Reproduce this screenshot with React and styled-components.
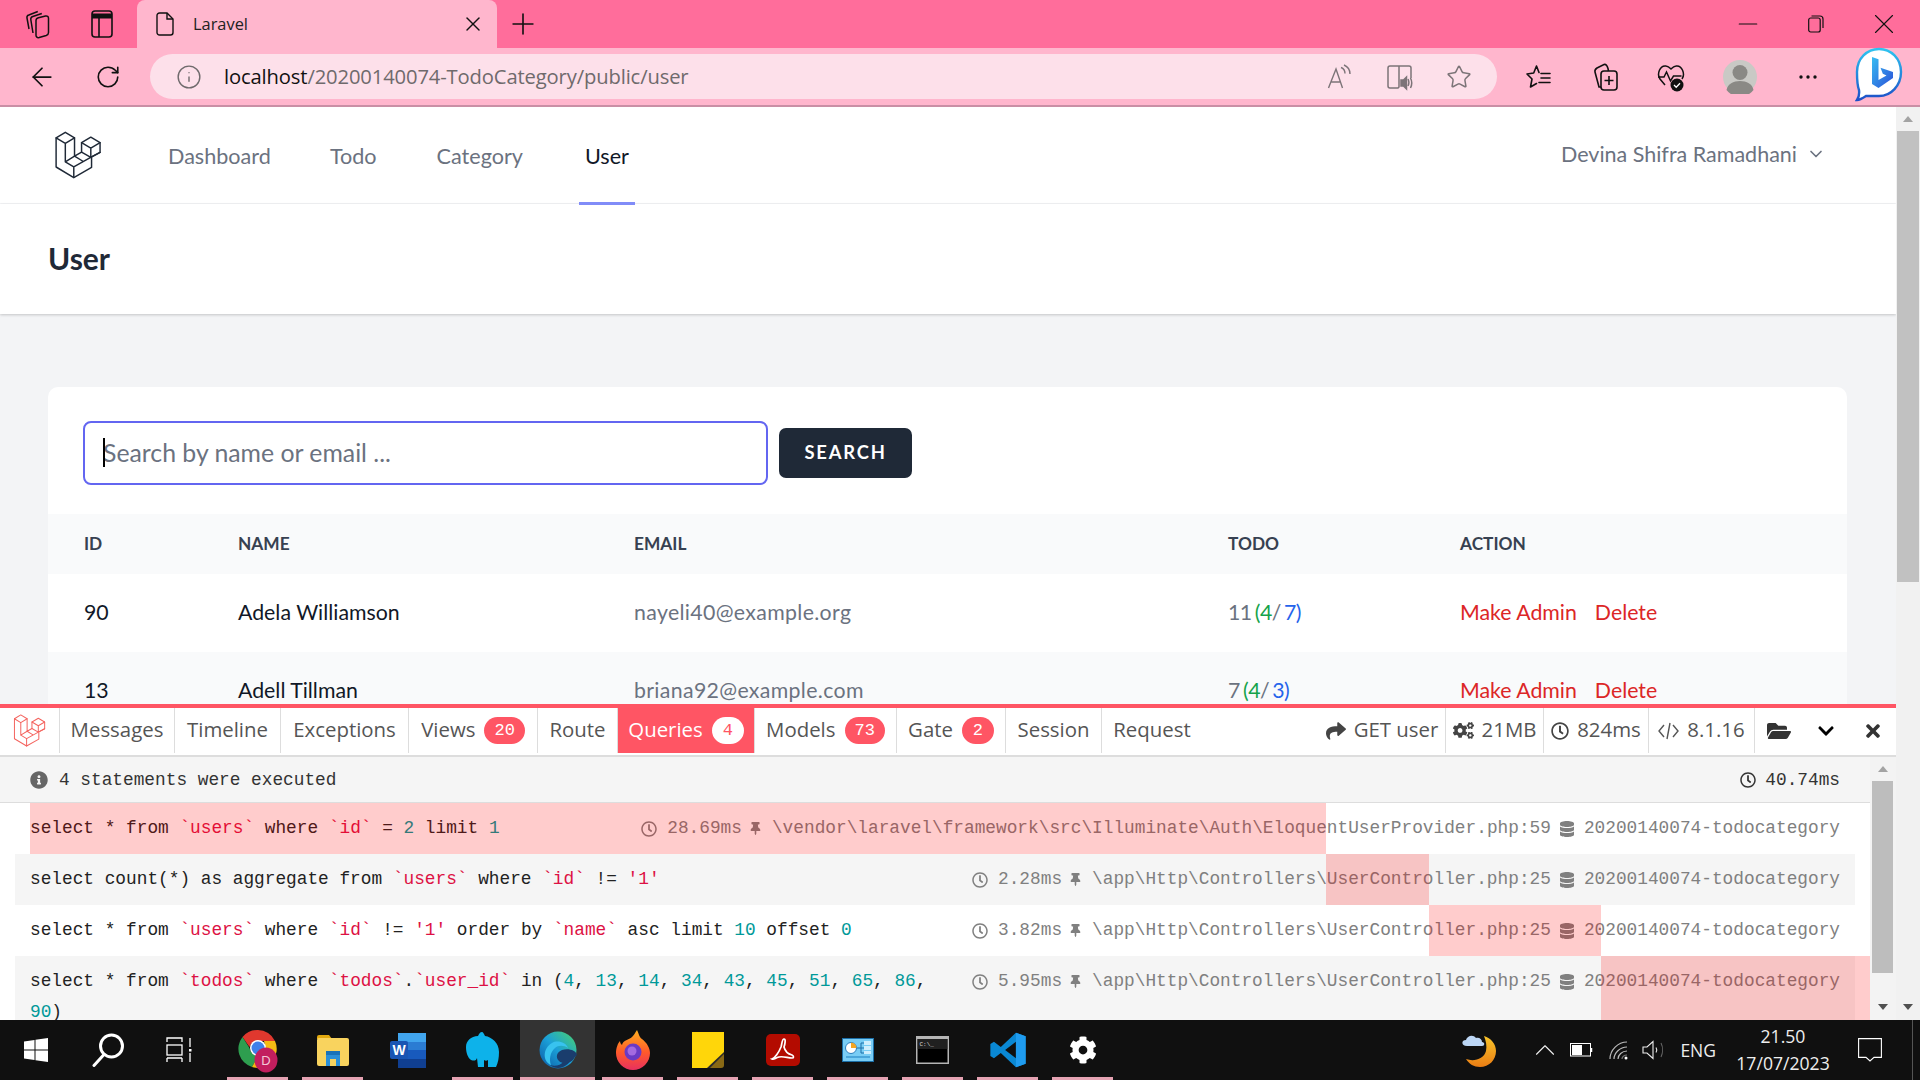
import React from 'react';
import styled, { createGlobalStyle } from 'styled-components';
import { ArrowLeft, RotateCw, Plus, X, Minus, Info, Star, ChevronDown, ChevronUp } from 'lucide-react';
import { FaShare, FaCogs, FaRegClock, FaFolderOpen, FaChevronDown, FaTimes, FaThumbtack, FaDatabase, FaInfoCircle, FaCog } from 'react-icons/fa';

const Global = createGlobalStyle`
  html, body { margin: 0; padding: 0; width: 1920px; height: 1080px; overflow: hidden; background: #fff; }
  * { box-sizing: border-box; }
`;

const RED = '#ff5564';
const UI = '"Open Sans", "Noto Sans", sans-serif';
const APP = 'Lato, "Open Sans", sans-serif';
const MONO = '"Liberation Mono", monospace';

const Screen = styled.div`
  width: 1920px; height: 1080px; display: flex; flex-direction: column; overflow: hidden; font-family: ${UI};
`;

/* browser chrome */
const TabStrip = styled.div`
  height: 48px; flex: none; background: #ff6d9b; display: flex; align-items: center;
`;
const Slot = styled.div`
  width: ${p => p.$w}px; height: 100%; flex: none; display: flex; align-items: center; justify-content: center; color: ${p => p.$c || '#111'};
`;
const Tab = styled.div`
  width: 360px; height: 48px; margin-left: 9px; background: #ffb6cd; border-radius: 8px 8px 0 0; display: flex; align-items: center; padding-left: 19px; flex: none;
`;
const TabTitle = styled.span`
  font-size: 16.4px; color: #222; margin-left: 19px; flex: 1; padding-bottom: 2px;
`;
const WindowControls = styled.div`
  margin-left: auto; display: flex; height: 100%; padding-right: 2px;
`;
const Toolbar = styled.div`
  height: 59px; flex: none; background: #ffb6cd; border-bottom: 2px solid #c98fa5; display: flex; align-items: center;
`;
const Omnibox = styled.div`
  width: 1347px; height: 45px; margin-left: 18px; margin-right: 9px; border-radius: 23px; background: #fde0ea; display: flex; align-items: center; padding-left: 22px; padding-right: 8px; flex: none;
`;
const Url = styled.div`
  margin-left: 18px; padding-bottom: 2px; font-size: 20.2px; color: #6f6a6c; white-space: nowrap; letter-spacing: -.13px;
  b { font-weight: 400; color: #111; }
`;
const OmniActions = styled.div`
  margin-left: auto; display: flex; height: 100%;
`;

/* page */
const Body = styled.div`
  flex: 1; min-height: 0; position: relative; display: flex;
`;
const Page = styled.div`
  flex: 1; min-width: 0; background: #f3f4f6; overflow: hidden;
`;
const Scrollbar = styled.div`
  width: 24px; flex: none; background: #f1f1f1; display: flex; flex-direction: column; align-items: center; position: relative;
`;
const ArrowUp = styled.div`
  width: 0; height: 0; border-left: 5px solid transparent; border-right: 5px solid transparent; border-bottom: 6px solid #a3a3a3; margin-top: 9px;
`;
const ScrollThumb = styled.div`
  width: 22px; height: 451px; background: #c1c1c1; margin-top: 9px;
`;
const ArrowDown = styled.div`
  width: 0; height: 0; border-left: 5px solid transparent; border-right: 5px solid transparent; border-top: 6px solid #505050; margin-top: auto; margin-bottom: 10px;
`;
const Nav = styled.nav`
  height: 97px; background: #fff; border-bottom: 1px solid #f3f4f6; display: flex; align-items: stretch; padding-left: 54px; padding-right: 70px;
`;
const LogoBox = styled.div`
  display: flex; align-items: center; width: 108px; flex: none; padding-bottom: 1px;
`;
const NavLink = styled.a`
  display: flex; align-items: center; margin-left: ${p => p.$ml}px; padding: 2px 6px 0; height: 98px; font-family: ${APP}; font-size: 21.6px; color: ${p => p.$active ? '#111827' : '#6b7280'};
  border-bottom: 3px solid ${p => p.$active ? '#818cf8' : 'transparent'};
`;
const UserMenu = styled.div`
  margin-left: auto; display: flex; align-items: center; gap: 9px; font-family: ${APP}; font-size: 21.5px; color: #6b7280; padding-bottom: 3px;
`;
const PageHeader = styled.header`
  height: 110px; background: #fff; box-shadow: 0 1px 3px rgba(0,0,0,.14), 0 1px 2px rgba(0,0,0,.06); display: flex; align-items: center; padding: 0 0 2px 48px;
`;
const PageTitle = styled.h2`
  margin: 0; font-family: ${APP}; font-size: 30px; font-weight: 700; color: #1f2937;
`;
const Card = styled.section`
  margin: 73px 49px 0 48px; background: #fff; border-radius: 10px; overflow: hidden;
`;
const SearchRow = styled.div`
  display: flex; align-items: center; gap: 11px; padding: 34px 35px 29px;
`;
const InputWrap = styled.div`
  position: relative; width: 685px; height: 64px; flex: none;
`;
const SearchInput = styled.input`
  width: 100%; height: 100%; border: 2px solid #6366f1; border-radius: 8px; padding: 0 18px 2px; outline: none; background: #fff; font-family: ${APP}; font-size: 24.8px; color: #111;
  &::placeholder { color: #6b7280; opacity: 1; }
`;
const Caret = styled.span`
  position: absolute; left: 20px; top: 17px; width: 1.5px; height: 29px; background: #000;
`;
const SearchButton = styled.button`
  width: 133px; height: 50px; border: 0; border-radius: 7px; padding: 0 0 2px; background: #1f2937; color: #fff; font-family: ${APP}; font-weight: 700; font-size: 18.4px; letter-spacing: 1.8px;
`;
const TableRow = styled.div`
  display: grid; grid-template-columns: 154px 396px 594px 232px 1fr; padding-left: 36px; align-items: center;
  height: ${p => p.$h}px; background: ${p => p.$alt ? '#f9fafb' : '#fff'};
`;
const Th = styled.div`
  font-family: ${APP}; font-weight: 700; font-size: 17.3px; color: #374151; text-transform: uppercase; padding-bottom: 2px;
`;
const Td = styled.div`
  font-family: ${APP}; font-size: 21.3px; color: ${p => p.$c || '#111827'}; white-space: nowrap; padding-bottom: 2px;
`;
const EmailCell = styled(Td)`
  color: #6b7280; letter-spacing: .34px;
`;
const TodoCell = styled(Td)`
  color: #6b7280; word-spacing: -1.5px; letter-spacing: -.6px;
`;
const Green = styled.span` color: #16a34a; `;
const Blue = styled.span` color: #2563eb; `;
const DangerLink = styled.a`
  color: #dc2626; margin-right: 18px;
`;

/* debugbar */
const Debugbar = styled.div`
  position: absolute; left: 0; right: 24px; bottom: 0; height: 316px; background: #fff; border-top: 4px solid ${RED}; display: flex; flex-direction: column;
`;
const DebugTabs = styled.div`
  height: 49px; flex: none; display: flex; border-bottom: 2px solid #ddd; padding-bottom: 2px; background: #fff;
`;
const DebugLogo = styled.div`
  width: 60px; display: flex; align-items: center; justify-content: center; border-right: 1px solid #ddd; flex: none;
`;
const DebugTab = styled.div`
  width: ${p => p.$w}px; display: flex; align-items: center; justify-content: center; gap: 9px; flex: none; white-space: nowrap; font-family: ${UI}; font-size: 20.4px;
  line-height: 26px; border-right: ${p => p.$last ? 0 : '1px solid #ddd'};
  color: ${p => p.$active ? '#fff' : '#555'}; background: ${p => p.$active ? RED : '#fff'};
  & > span:first-child { margin-top: -3px; }
`;
const Badge = styled.span`
  min-width: 32px; height: 27px; padding: 0 10px; border-radius: 14px; display: flex; align-items: center; justify-content: center; font-family: ${MONO}; font-size: 17px;
  background: ${p => p.$light ? '#fff' : RED}; color: ${p => p.$light ? RED : '#fff'};
`;
const DebugStats = styled.div`
  margin-left: auto; display: flex; height: 100%;
`;
const Stat = styled.div`
  width: ${p => p.$w}px; display: flex; align-items: center; justify-content: center; gap: 8px; font-size: 20.4px; color: #555; border-right: 1px solid #ddd; white-space: nowrap; flex: none;
  & > span { margin-top: -3px; }
`;
const ToolButton = styled.div`
  width: ${p => p.$w}px; display: flex; align-items: center; justify-content: center; color: ${p => p.$c || '#333'}; flex: none;
`;
const DebugMain = styled.div`
  flex: 1; min-height: 0; display: flex;
`;
const DebugList = styled.div`
  flex: 1; min-width: 0; display: flex; flex-direction: column; overflow: hidden;
`;
const Summary = styled.div`
  height: 46px; flex: none; display: flex; align-items: center; background: #f5f5f5; border-bottom: 1px solid #ddd; padding: 0 30px; font-family: ${MONO}; font-size: 17.8px; color: #333; gap: 11px;
`;
const SummaryRight = styled.span`
  margin-left: auto; display: flex; align-items: center; gap: 9px;
`;
const Row = styled.div`
  position: relative; width: 1840px; margin-left: 15px; flex: none; min-height: 51px; padding: 0 15px; display: flex; justify-content: space-between; gap: 8px;
  background: ${p => p.$alt ? '#f5f5f5' : '#fff'}; font-family: ${MONO}; font-size: 17.8px; line-height: 31px;
`;
const Sql = styled.div`
  padding: 10px 0; color: #222; min-width: 0;
  i { font-style: normal; color: #dd1144; }
  u { text-decoration: none; color: #009999; }
`;
const Meta = styled.div`
  flex: none; display: flex; color: #808080; padding-top: 10px; white-space: nowrap; height: 41px; align-items: center;
`;
const MetaText = styled.span`
  margin-left: ${p => p.$ml}px; margin-right: ${p => p.$mr}px;
`;
const TimeBar = styled.div`
  position: absolute; top: 0; bottom: 0; background: rgba(255, 0, 0, .2); pointer-events: none;
`;
const DebugScroll = styled.div`
  width: 26px; flex: none; background: #f3f3f3; display: flex; flex-direction: column; align-items: center;
`;
const DebugThumb = styled.div`
  width: 21px; height: 192px; background: #bdbdbd; margin-top: 9px; margin-left: -2px;
`;

/* taskbar */
const Taskbar = styled.footer`
  height: 60px; flex: none; background: #101010; display: flex; align-items: stretch; position: relative;
`;
const SysButton = styled.div`
  width: 72px; flex: none; display: flex; align-items: center; justify-content: center; color: #fff;
`;
const AppList = styled.div`
  display: flex; margin-left: 4px; flex: none;
`;
const AppSlot = styled.div`
  width: 75px; flex: none; display: flex; align-items: center; justify-content: center; position: relative;
  background: ${p => p.$active ? '#333' : 'transparent'};
  &::after { content: ''; position: absolute; bottom: 0; height: 3px; background: #e5a3b3; display: ${p => p.$open ? 'block' : 'none'};
    left: ${p => p.$active ? 0 : 7}px; right: ${p => p.$active ? 0 : 7}px; }
`;
const Tray = styled.div`
  margin-left: auto; display: flex; align-items: center; padding-right: 7px; color: #f0f0f0;
`;
const TrayItem = styled.div`
  margin-left: ${p => p.$ml}px; display: flex; align-items: center; justify-content: center; flex: none;
`;
const TrayText = styled(TrayItem)`
  font-size: 17.5px; color: #eee; font-family: ${UI};
`;
const Clock = styled(TrayItem)`
  flex-direction: column; width: 92px; font-size: 17.6px; line-height: 27px; color: #eee; font-family: ${UI}; white-space: nowrap;
`;
const TrayDivider = styled(TrayItem)`
  width: 1px; height: 60px; background: #555;
`;

/* icon drawings */
const Laravel = ({ size, color, sw = 11 }) => (
  <svg width={size} height={size} viewBox="26 10 288 296" fill="none" stroke={color} strokeWidth={sw} strokeLinejoin="round" strokeLinecap="round">
    <path d="M35 52.6 91.8 18l56.8 34.6M35 52.6V232l109 65 109.6-62v-65L306 142V82l-57-34-57 34v58l-43.4 25V52.6" />
    <path d="M35 52.6 91.8 87l56.8-34.6M91.8 87v113l52.2 31v66M91.8 200l56.8-35 49.4 30M144 231l109.6-61M192 140l57 33 57-31M192 82l57 33 57-33M249 115v58" />
  </svg>
);
const TabActions = () => (
  <svg width="28" height="30" viewBox="0 0 28 30" fill="none" stroke="#111" strokeWidth="1.5" strokeLinejoin="round"><path d="M12 11.500c0-1.500 1-2.300 2.500-2.700l7-1.800c1.800-.4 3 .5 3 2.300v14.200c0 1.500-.8 2.500-2.300 3l-7 2c-2 .5-3.200-.5-3.200-2.300Z" /><path d="M9 24 6.800 10.500c-.2-1.500.5-2.500 2-3l9-3" /><path d="M5 20 3 9c-.3-1.500.3-2.500 1.800-3l9-3.500" /></svg>
);
const VerticalTabs = () => (
  <svg width="22" height="30" viewBox="0 0 22 30" fill="none" stroke="#111" strokeWidth="1.6"><rect x="1" y="2" width="20" height="26" rx="3" /><path d="M1 7h20" strokeWidth="5" /><path d="M8 9v19" /></svg>
);
const FilePage = () => (
  <svg width="18" height="24" viewBox="0 0 18 24" fill="none" stroke="#111" strokeWidth="1.4"><path d="M3.500 1H11l6 6v13.500A2.500 2.500 0 0 1 14.500 23h-11A2.500 2.500 0 0 1 1 20.500v-17A2.500 2.500 0 0 1 3.500 1Z" /><path d="M11 1v6h6" /></svg>
);
const Restore = () => (
  <svg width="16" height="18" viewBox="0 0 16 18" fill="none" stroke="#111" strokeWidth="1.2"><rect x=".7" y="3" width="11.500" height="14" rx="2" /><path d="M3.500 1h8.500A3 3 0 0 1 15 4v9" /></svg>
);
const ReadAloud = () => (
  <svg width="26" height="26" viewBox="0 0 26 26" fill="none" stroke="#7c7478" strokeWidth="1.4"><path d="M1.500 24 9 5l6.500 19M4.500 18h8.500" /><path d="M14 3.500c2.500 1 4 3.500 4 6M17 1c3.500 1.500 6 5 6 9" /></svg>
);
const Immersive = () => (
  <svg width="26" height="28" viewBox="0 0 26 28" fill="none" stroke="#7c7478" strokeWidth="1.5"><path d="M12 3H3a2 2 0 0 0-2 2v18a2 2 0 0 0 2 2h8l1-1V3Zm0 0h10a2 2 0 0 1 2 2v10" /><path d="M14 17h2.500l3-3v12l-3-3H14z" fill="#7c7478" /><path d="M21 16c1 2 1 5 0 7M23.500 15c1.500 3 1.500 7 0 10" /></svg>
);
const Favorites = () => (
  <svg width="26" height="26" viewBox="0 0 26 26" fill="none" stroke="#111" strokeWidth="1.600" strokeLinejoin="round" strokeLinecap="round"><path d="M10.500 2 13 8.500M10.500 2 7.700 9 1 10l5 5-1.500 8 6-3.500" /><path d="M15 9.500h9M15 14h9M13 18.500h11" /></svg>
);
const Collections = () => (
  <svg width="26" height="30" viewBox="0 0 26 30" fill="none" stroke="#111" strokeWidth="1.600"><rect x="9" y="9" width="16" height="19" rx="3" /><path d="M17 14v9M12.500 18.500h9" /><path d="M9 25 7 25 3 10c-.5-2 .5-3 2-4l7-3.500c2-.5 3 .5 4 4l.5 2.500" /></svg>
);
const Health = () => (
  <svg width="28" height="30" viewBox="0 0 28 30" fill="none" stroke="#111" strokeWidth="1.500"><path d="M8 23 3 17C-.5 12 3 3 9 4c2.500.3 4 2 5 3 1-1 2.500-2.700 5-3 6-1 9.500 8 6 13" /><path d="M1 15h6l2.500-5 4 9 3-5h8" /><circle cx="20" cy="23" r="6.500" fill="#111" stroke="none" /><path d="m17 23 2.200 2.200 3.800-4" stroke="#fff" strokeWidth="1.300" /></svg>
);
const Avatar = () => (
  <svg width="34" height="34" viewBox="0 0 34 34"><circle cx="17" cy="17" r="17" fill="#c9c9c5" /><circle cx="17" cy="12.500" r="7.500" fill="#8a8985" /><path d="M3.500 30c1-6 7-9 13.500-9s12.500 3 13.500 9a17 17 0 0 1-27 0Z" fill="#8a8985" /></svg>
);
const Dots = () => (
  <svg width="20" height="6" viewBox="0 0 20 6" fill="#111"><circle cx="3" cy="3" r="1.700" /><circle cx="10" cy="3" r="1.700" /><circle cx="17" cy="3" r="1.700" /></svg>
);
const Bing = () => (
  <svg width="48" height="60" viewBox="0 0 48 60">
    <defs>
      <linearGradient id="bb" x1="0" y1="0" x2="1" y2="1"><stop offset="0" stopColor="#37bdf2" /><stop offset="1" stopColor="#2b4fd8" /></linearGradient>
      <linearGradient id="bs" x1="0" y1="0" x2="0" y2="1"><stop offset="0" stopColor="#2ec4f0" /><stop offset="1" stopColor="#1c4fc8" /></linearGradient>
    </defs>
    <path d="M24 2c12 0 22 9.500 22 23S36 49 24 49H11c-3 2-6 4-9 4 2-3 2.500-6 2-10C2 38 2 31 2 25 2 11.500 12 2 24 2Z" fill="#fff" stroke="url(#bs)" strokeWidth="2.400" />
    <path d="M17 10l6.500 2.300V33l8-4.500-3.700-1.800-2.300-6 12.500 4.400V31L23.500 41 17 37Z" fill="url(#bb)" />
  </svg>
);
const WinLogo = () => (
  <svg width="24" height="24" viewBox="0 0 24 24" fill="#fff"><path d="M0 3.500 10.500 2v9.500H0ZM11.500 1.800 24 0v11.500H11.500ZM0 12.500h10.500V22L0 20.500ZM11.500 12.500H24V24l-12.500-1.800Z" /></svg>
);
const SearchGlyph = () => (
  <svg width="34" height="34" viewBox="0 0 34 34" fill="none" stroke="#fff" strokeWidth="3"><circle cx="20.500" cy="13" r="11" /><path d="M13 21.500 3 32.500" strokeLinecap="round" /></svg>
);
const TaskView = () => (
  <svg width="28" height="26" viewBox="0 0 28 26" fill="none" stroke="#fff" strokeWidth="1.300"><path d="M1 5V1h15v4M1 21v4M16 25v-4M1 21h15" /><rect x="1" y="8" width="15" height="10" /><path d="M24 1v9" /><path d="M24 16v9" /><rect x="23" y="12" width="2.500" height="2.500" fill="#fff" stroke="none" /></svg>
);
const Chrome = () => (
  <svg width="44" height="48" viewBox="-3 -2 44 48">
    <path d="M19 2a19 19 0 0 1 17 11H19a9 9 0 0 0-8.500 6L3.500 9A19 19 0 0 1 19 2Z" fill="#e0382e" />
    <path d="M3.500 9l7 11a9 9 0 0 0 8.500 8L13 39A19 19 0 0 1 3.500 9Z" fill="#2e9e4f" />
    <path d="M36 13a19 19 0 0 1-23 26l6-11c6 0 9-6 6-15Z" fill="#f5bb14" />
    <circle cx="19" cy="20" r="8" fill="#fff" /><circle cx="19" cy="20" r="6.500" fill="#3f80ea" />
    <ellipse cx="27" cy="32" rx="11.500" ry="12.500" fill="#c21e5e" />
    <text x="27" y="37" fontSize="13" fill="#f4c6d6" textAnchor="middle" fontFamily="Liberation Sans, sans-serif">D</text>
  </svg>
);
const Folder = () => (
  <svg width="32" height="32" viewBox="0 0 32 32"><path d="M0 3a2 2 0 0 1 2-2h10l3 4h-15Z" fill="#e2a90f" /><rect x="0" y="4" width="32" height="28" rx="2" fill="#f9d35e" /><path d="M9 18h14v14H9Z" fill="#2c8fd6" /><path d="M13 25h6v7h-6Z" fill="#f9d35e" /><path d="M9 17h14v4H9Z" fill="#1a72b8" /></svg>
);
const Word = () => (
  <svg width="36" height="36" viewBox="0 0 36 36"><rect x="8" y="1" width="28" height="35" rx="2" fill="#2b7cd3" /><rect x="8" y="1" width="28" height="9" fill="#41a5ee" /><rect x="8" y="18" width="28" height="9" fill="#185abd" /><rect x="8" y="27" width="28" height="9" fill="#103f91" /><rect x="0" y="9" width="18" height="18" rx="2" fill="#1a55b3" /><text x="9" y="23" fontSize="14" fontWeight="700" fill="#fff" textAnchor="middle" fontFamily="Liberation Sans, sans-serif">W</text></svg>
);
const Elephant = () => (
  <svg width="34" height="36" viewBox="0 0 34 36" fill="#0db2ea"><path d="M16 0c1 0 2 2 3 4 7 1 14 7 14 16 0 6-1 11-3 15h-8v-7c-1 1-3 1-4 0v7h-6l-1-9c-1 3-3 3-6 2-3-2-5-7-5-13C0 9 5 4 12 4c1-2 2-4 4-4Z" /></svg>
);
const Edge = () => (
  <svg width="38" height="38" viewBox="0 0 38 38">
    <defs>
      <linearGradient id="eg" x1="0" y1="1" x2="1" y2="0"><stop offset="0" stopColor="#0c59a4" /><stop offset=".5" stopColor="#1ba0d8" /><stop offset="1" stopColor="#4bd36a" /></linearGradient>
    </defs>
    <circle cx="19" cy="19" r="18.500" fill="url(#eg)" />
    <path d="M35 25c-3 6-9 12-16 12-3 0-6-1-8-3 5 2 11 0 13-3 1-2 1-4-1-4h12Z" fill="#1a3d6d" />
    <path d="M38 24c-1-5-9-7-15-5-5 2-7 7-3 11 3 3 9 3 14-1l2-3Z" fill="#1a3d6d" />
    <path d="M12 34C3 30 4 17 13 12c5-3 14-1 16 5-4-3-10-3-13 0-5 4-6 12-4 17Z" fill="#38c3ef" />
  </svg>
);
const Firefox = () => (
  <svg width="36" height="40" viewBox="0 0 36 40">
    <defs><linearGradient id="ff" x1="0" y1="0" x2="0" y2="1"><stop offset="0" stopColor="#ffb01f" /><stop offset=".55" stopColor="#ff5a2a" /><stop offset="1" stopColor="#e8305f" /></linearGradient></defs>
    <path d="M22 0c2 4 2 7 5 9 5 4 8 9 8 14a17 17 0 0 1-34 0C1 18 3 13 5 11c0 2 1 3 2 4 1-5 7-5 10-8 2-2 3-4 5-7Z" fill="url(#ff)" />
    <circle cx="18" cy="22" r="8.500" fill="#6a3ac4" /><circle cx="17" cy="21" r="4.500" fill="#a46ae0" />
  </svg>
);
const Sticky = () => (
  <svg width="32" height="36" viewBox="0 0 32 36"><path d="M0 0h32v22L17 36H0Z" fill="#ffd60a" /><path d="M32 20v13a3 3 0 0 1-3 3H15Z" fill="#2b2b2b" /><path d="M32 22v11a3 3 0 0 1-3 3H18Z" fill="#e8a800" opacity=".5" /></svg>
);
const Acrobat = () => (
  <svg width="34" height="32" viewBox="0 0 34 32"><rect x="0" y="0" width="34" height="32" rx="5" fill="#b30b00" /><path d="M6 25c3-1 7-7 9-12 1-3 1-8 3-8s1 5 0 8c1 4 4 7 8 8 2 1 2 3 0 3-4 0-9-2-13-1-4 1-5 3-7 2Z" fill="none" stroke="#fff" strokeWidth="1.700" /></svg>
);
const ControlPanel = () => (
  <svg width="32" height="24" viewBox="0 0 32 24"><rect width="32" height="24" fill="#1c6fa8" /><rect x="1" y="1" width="30" height="22" fill="#79cdf5" /><circle cx="9" cy="10" r="5.500" fill="#fff" stroke="#2a7fbf" /><path d="M9 10V4.500A5.500 5.500 0 0 1 14.500 10Z" fill="#f5a623" /><path d="M15 10h4V5h3M19 10h3M19 10v5h3" stroke="#1c6fa8" fill="none" /><rect x="22" y="3" width="7" height="4" fill="#cfeefd" /><rect x="22" y="8" width="7" height="4" fill="#cfeefd" /><rect x="22" y="13" width="7" height="3" fill="#cfeefd" /><rect x="4" y="18" width="24" height="2" fill="#4aa6db" /></svg>
);
const Cmd = () => (
  <svg width="33" height="28" viewBox="0 0 33 28"><rect width="33" height="28" fill="#b5b5b5" /><rect x="1.500" y="3" width="30" height="23.500" fill="#000" /><rect x="1.500" y="3" width="30" height="10" fill="#2d2d2d" opacity=".7" /><text x="3.500" y="10" fontSize="6" fill="#ddd" fontFamily="Liberation Mono, monospace">C:\_</text></svg>
);
const VsCode = () => (
  <svg width="36" height="36" viewBox="0 0 100 100"><path d="M72 2 30 42 11 27 1 33v34l10 6 19-15 42 40 27-10V12Zm0 25v46L42 50Z" fill="#0a88d4" fillRule="evenodd" /><path d="M72 2l27 10v76L72 98Z" fill="#1f9cf0" /></svg>
);
const Weather = () => (
  <svg width="34" height="34" viewBox="0 0 34 34">
    <defs><linearGradient id="mo" x1="0" y1="0" x2="0" y2="1"><stop offset="0" stopColor="#f8c52a" /><stop offset="1" stopColor="#ea7d14" /></linearGradient></defs>
    <path d="M22 3c7 2 12 8 12 15 0 9-7 16-16 16-6 0-11-3-14-8 8 3 18 0 20-8 1-5 0-10-2-15Z" fill="url(#mo)" />
    <path d="M5 13c-6 0-6-6-1-6 1-4 7-6 10-2 3-1 6 1 6 4 3 0 3 4 0 4Z" fill="#bcd6f5" />
  </svg>
);
const Battery = () => (
  <svg width="23" height="14" viewBox="0 0 23 14" fill="none" stroke="#fff" strokeWidth="1"><rect x=".5" y=".5" width="20" height="12.500" /><rect x="2" y="2" width="10" height="10" fill="#fff" stroke="none" /><path d="M21.500 5v4" strokeWidth="1.500" /></svg>
);
const Wifi = () => (
  <svg width="20" height="20" viewBox="0 0 20 20" fill="none" stroke="#bbb" strokeWidth="1.200"><path d="M1 19C1 10 9 2 18 2" /><path d="M5 19c0-6 6-12 13-12" /><path d="M9 19c0-4 4-8 9-8" /><path d="M13 19c0-2 2-4 5-4" stroke="#777" /><circle cx="17" cy="18" r="1.500" fill="#fff" stroke="none" /></svg>
);
const Speaker = () => (
  <svg width="23" height="20" viewBox="0 0 23 20" fill="none" stroke="#eee" strokeWidth="1.100"><path d="M1 7h4l6-5.500v17L5 13H1Z" /><path d="M14 7.500c1 1.500 1 3.500 0 5" /><path d="M19 3c2 4 2 10 0 14" stroke="#666" /></svg>
);
const Notify = () => (
  <svg width="24" height="24" viewBox="0 0 24 24" fill="none" stroke="#fff" strokeWidth="1.100"><path d="M.6.6h22.800v18.800H16L12 23l-4-3.600H.6Z" /></svg>
);
const CodeGlyph = () => (
  <svg width="21" height="20" viewBox="0 0 21 20" fill="none" stroke="#555" strokeWidth="1.400"><path d="M6 4 1 10l5 6M15 4l5 6-5 6M12 2 9 18" /></svg>
);

const queries = [
  { time: 28.69, file: '\\vendor\\laravel\\framework\\src\\Illuminate\\Auth\\EloquentUserProvider.php:59', sql: <>select * from <i>`users`</i> where <i>`id`</i> = <u>2</u> limit <u>1</u></> },
  { time: 2.28, file: '\\app\\Http\\Controllers\\UserController.php:25', sql: <>select count(*) as aggregate from <i>`users`</i> where <i>`id`</i> != <i>'1'</i></> },
  { time: 3.82, file: '\\app\\Http\\Controllers\\UserController.php:25', sql: <>select * from <i>`users`</i> where <i>`id`</i> != <i>'1'</i> order by <i>`name`</i> asc limit <u>10</u> offset <u>0</u></> },
  { time: 5.95, file: '\\app\\Http\\Controllers\\UserController.php:25', sql: <>select * from <i>`todos`</i> where <i>`todos`</i>.<i>`user_id`</i> in (<u>4</u>, <u>13</u>, <u>14</u>, <u>34</u>, <u>43</u>, <u>45</u>, <u>51</u>, <u>65</u>, <u>86</u>, <u>90</u>)</> },
];
const TOTAL = 40.74;

const apps = [
  { key: 'chrome', icon: <Chrome />, open: true },
  { key: 'folder', icon: <Folder />, open: true },
  { key: 'word', icon: <Word /> },
  { key: 'elephant', icon: <Elephant />, open: true },
  { key: 'edge', icon: <Edge />, open: true, active: true },
  { key: 'firefox', icon: <Firefox />, open: true },
  { key: 'sticky', icon: <Sticky />, open: true },
  { key: 'acrobat', icon: <Acrobat />, open: true },
  { key: 'panel', icon: <ControlPanel />, open: true },
  { key: 'cmd', icon: <Cmd />, open: true },
  { key: 'code', icon: <VsCode />, open: true },
  { key: 'gear', icon: <FaCog size={28} color="#fff" />, open: true },
];

export default function App() {
  let offset = 15;
  return (
    <Screen>
      <Global />
      <TabStrip>
        <Slot $w={76}><TabActions /></Slot>
        <Slot $w={52}><VerticalTabs /></Slot>
        <Tab>
          <FilePage />
          <TabTitle>Laravel</TabTitle>
          <Slot $w={48}><X size={24} strokeWidth={1.4} /></Slot>
        </Tab>
        <Slot $w={52}><Plus size={34} strokeWidth={1.15} /></Slot>
        <WindowControls>
          <Slot $w={68}><Minus size={30} strokeWidth={.9} /></Slot>
          <Slot $w={68}><Restore /></Slot>
          <Slot $w={68}><X size={34} strokeWidth={.8} /></Slot>
        </WindowControls>
      </TabStrip>
      <Toolbar>
        <Slot $w={84}><ArrowLeft size={30} strokeWidth={1.4} /></Slot>
        <Slot $w={48}><RotateCw size={26} strokeWidth={1.5} /></Slot>
        <Omnibox>
          <Slot $w={34} $c="#6f6a6c"><Info size={26} strokeWidth={1.3} /></Slot>
          <Url><b>localhost</b>/20200140074-TodoCategory/public/user</Url>
          <OmniActions>
            <Slot $w={60}><ReadAloud /></Slot>
            <Slot $w={59}><Immersive /></Slot>
            <Slot $w={60} $c="#7c7478"><Star size={26} strokeWidth={1.4} /></Slot>
          </OmniActions>
        </Omnibox>
        <Slot $w={66}><Favorites /></Slot>
        <Slot $w={66}><Collections /></Slot>
        <Slot $w={66}><Health /></Slot>
        <Slot $w={72}><Avatar /></Slot>
        <Slot $w={64}><Dots /></Slot>
        <Slot $w={78}><Bing /></Slot>
      </Toolbar>
      <Body>
        <Page>
          <Nav>
            <LogoBox><Laravel size={48} color="#1f2937" sw={9} /></LogoBox>
            <NavLink $ml={0}>Dashboard</NavLink>
            <NavLink $ml={47}>Todo</NavLink>
            <NavLink $ml={48}>Category</NavLink>
            <NavLink $ml={50} $active>User</NavLink>
            <UserMenu>Devina Shifra Ramadhani <ChevronDown size={20} strokeWidth={2} /></UserMenu>
          </Nav>
          <PageHeader><PageTitle>User</PageTitle></PageHeader>
          <Card>
            <SearchRow>
              <InputWrap>
                <SearchInput placeholder="Search by name or email ..." readOnly />
                <Caret />
              </InputWrap>
              <SearchButton>SEARCH</SearchButton>
            </SearchRow>
            <TableRow $h={60} $alt>
              <Th>Id</Th><Th>Name</Th><Th>Email</Th><Th>Todo</Th><Th>Action</Th>
            </TableRow>
            <TableRow $h={78}>
              <Td>90</Td><Td>Adela Williamson</Td><EmailCell>nayeli40@example.org</EmailCell>
              <TodoCell>11 <Green>(4</Green>/ <Blue>7)</Blue></TodoCell>
              <Td><DangerLink>Make Admin</DangerLink><DangerLink>Delete</DangerLink></Td>
            </TableRow>
            <TableRow $h={78} $alt>
              <Td>13</Td><Td>Adell Tillman</Td><EmailCell>briana92@example.com</EmailCell>
              <TodoCell>7 <Green>(4</Green>/ <Blue>3)</Blue></TodoCell>
              <Td><DangerLink>Make Admin</DangerLink><DangerLink>Delete</DangerLink></Td>
            </TableRow>
          </Card>
        </Page>
        <Scrollbar>
          <ArrowUp />
          <ScrollThumb />
          <ArrowDown />
        </Scrollbar>
        <Debugbar>
          <DebugTabs>
            <DebugLogo><Laravel size={33} color="#f4645f" sw={9} /></DebugLogo>
            <DebugTab $w={115}><span>Messages</span></DebugTab>
            <DebugTab $w={106}><span>Timeline</span></DebugTab>
            <DebugTab $w={128}><span>Exceptions</span></DebugTab>
            <DebugTab $w={129}><span>Views</span> <Badge>20</Badge></DebugTab>
            <DebugTab $w={80}><span>Route</span></DebugTab>
            <DebugTab $w={137} $active><span>Queries</span> <Badge $light>4</Badge></DebugTab>
            <DebugTab $w={142}><span>Models</span> <Badge>73</Badge></DebugTab>
            <DebugTab $w={109}><span>Gate</span> <Badge>2</Badge></DebugTab>
            <DebugTab $w={96}><span>Session</span></DebugTab>
            <DebugTab $w={100} $last><span>Request</span></DebugTab>
            <DebugStats>
              <Stat $w={127}><FaShare size={20} color="#444" /> <span>GET user</span></Stat>
              <Stat $w={98}><FaCogs size={21} color="#444" /> <span>21MB</span></Stat>
              <Stat $w={105}><FaRegClock size={18} color="#444" /> <span>824ms</span></Stat>
              <Stat $w={106}><CodeGlyph /> <span>8.1.16</span></Stat>
              <ToolButton $w={48}><FaFolderOpen size={24} /></ToolButton>
              <ToolButton $w={46} $c="#000"><FaChevronDown size={18} /></ToolButton>
              <ToolButton $w={47}><FaTimes size={20} /></ToolButton>
            </DebugStats>
          </DebugTabs>
          <DebugMain>
            <DebugList>
              <Summary>
                <FaInfoCircle size={18} color="#666" />
                <span>4 statements were executed</span>
                <SummaryRight><FaRegClock size={16} /> 40.74ms</SummaryRight>
              </Summary>
              {queries.map((q, i) => {
                const left = offset;
                const width = (q.time / TOTAL) * 100;
                offset += (q.time / TOTAL) * 1840;
                return (
                  <Row key={i} $alt={i % 2 === 1}>
                    <Sql>{q.sql}</Sql>
                    <Meta>
                      <FaRegClock size={16} />
                      <MetaText $ml={10} $mr={7}>{q.time.toFixed(2)}ms</MetaText>
                      <FaThumbtack size={13} />
                      <MetaText $ml={10} $mr={8}>{q.file}</MetaText>
                      <FaDatabase size={16} />
                      <MetaText $ml={9} $mr={0}>20200140074-todocategory</MetaText>
                    </Meta>
                    <TimeBar style={{ left, width: `${width}%` }} />
                  </Row>
                );
              })}
            </DebugList>
            <DebugScroll>
              <ArrowUp />
              <DebugThumb />
              <ArrowDown />
            </DebugScroll>
          </DebugMain>
        </Debugbar>
      </Body>
      <Taskbar>
        <SysButton><WinLogo /></SysButton>
        <SysButton><SearchGlyph /></SysButton>
        <SysButton><TaskView /></SysButton>
        <AppList>
          {apps.map(a => <AppSlot key={a.key} $open={a.open} $active={a.active}>{a.icon}</AppSlot>)}
        </AppList>
        <Tray>
          <TrayItem $ml={0}><Weather /></TrayItem>
          <TrayItem $ml={32}><ChevronUp size={34} strokeWidth={.8} /></TrayItem>
          <TrayItem $ml={8}><Battery /></TrayItem>
          <TrayItem $ml={16}><Wifi /></TrayItem>
          <TrayItem $ml={13}><Speaker /></TrayItem>
          <TrayText $ml={15}>ENG</TrayText>
          <Clock $ml={21}><span>21.50</span><span>17/07/2023</span></Clock>
          <TrayItem $ml={29}><Notify /></TrayItem>
          <TrayDivider $ml={30} />
        </Tray>
      </Taskbar>
    </Screen>
  );
}
